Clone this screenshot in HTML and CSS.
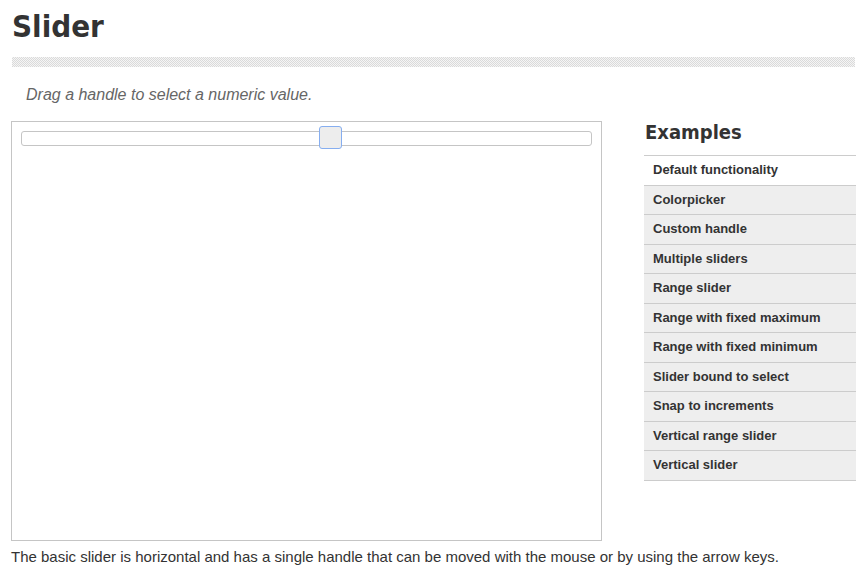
FILE: index.html
```html
<!DOCTYPE html>
<html lang="en">
<head>
    <meta charset="UTF-8">
    <meta name="viewport" content="width=device-width, initial-scale=1.0">
    <title>Slider</title>
    <link rel="stylesheet" href="styles.css">
</head>
<body>
    <div class="page">
        <h1 class="title">Slider</h1>
        <div class="sep"></div>
        <div class="content">
            <div class="main">
                <p class="desc">Drag a handle to select a numeric value.</p>
                <div class="demo">
                    <div class="slider">
                        <span class="handle"></span>
                    </div>
                </div>
            </div>
            <div class="side">
                <h2 class="side-title">Examples</h2>
                <ul class="examples">
                    <li class="active">Default functionality</li>
                    <li>Colorpicker</li>
                    <li>Custom handle</li>
                    <li>Multiple sliders</li>
                    <li>Range slider</li>
                    <li>Range with fixed maximum</li>
                    <li>Range with fixed minimum</li>
                    <li>Slider bound to select</li>
                    <li>Snap to increments</li>
                    <li>Vertical range slider</li>
                    <li>Vertical slider</li>
                </ul>
            </div>
        </div>
        <p class="note">The basic slider is horizontal and has a single handle that can be moved with the mouse or by using the arrow keys.</p>
    </div>
</body>
</html>
```

FILE: styles.css
```css
*{margin:0;padding:0;}
body{
    font-family: "Liberation Sans", Arial, sans-serif;
    color:#333;
    background:#fff;
}
.page{padding:0 5px 0 11px;}
.title{
    font-family: "DejaVu Sans", sans-serif;
    font-stretch: condensed;
    font-weight: bold;
    font-size: 31px;
    line-height: 52px;
    color:#333;
    padding-left:1px;
}
.sep{
    height:10px;
    margin-top:5px;
    margin-left:1px;
    width:843px;
    background: repeating-conic-gradient(#dadada 0 25%, #f5f5f5 0 50%) 0 0/2px 2px;
}
.content{display:flex;gap:42px;}
.main{width:591px;}
.desc{
    font-style: italic;
    font-size:16px;
    color:#666;
    padding:18px 0 0 15px;
    line-height:20px;
}
.demo{
    margin-top:16px;
    height:409px;
    border:1px solid #c5c5c5;
    padding:9px 9px 0 9px;
}
.slider{
    position:relative;
    height:13px;
    border:1px solid #c5c5c5;
    border-radius:3px;
}
.handle{
    position:absolute;
    left:297px;
    top:-6px;
    width:21px;
    height:21px;
    border:1px solid #86aef0;
    border-radius:3px;
    background:#ededed;
}
.side{width:212px;padding-top:53px;}
.side-title{
    font-family: "DejaVu Sans", sans-serif;
    font-stretch: condensed;
    font-weight: bold;
    font-size:20px;
    line-height:24px;
    color:#333;
    padding:0 0 11px 1px;
}
.examples{list-style:none;border-top:1px solid #ccc;}
.examples li{
    background:#eee;
    border-bottom:1px solid #ccc;
    font-size:13px;
    font-weight:bold;
    line-height:28.5px;
    padding-left:9px;
    color:#333;
}
.examples li.active{background:#fff;}
.note{font-size:15px;line-height:20px;margin-top:6px;color:#333;}
```
